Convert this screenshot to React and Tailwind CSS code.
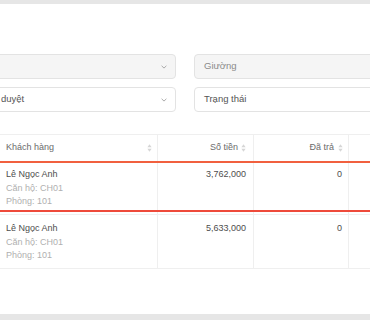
import React from "react";

function Chevron() {
  return (
    <svg width="6" height="4" viewBox="0 0 6 4" className="shrink-0">
      <path d="M0.6 0.8 L3 3.1 L5.4 0.8" fill="none" stroke="#a0a0a0" strokeWidth="0.9" />
    </svg>
  );
}

function Sort() {
  return (
    <svg width="5" height="8" viewBox="0 0 5 8" className="shrink-0">
      <path d="M2.5 0.3 L4.6 3.2 L0.4 3.2 Z" fill="#d6d6d6" />
      <path d="M2.5 7.7 L4.6 4.8 L0.4 4.8 Z" fill="#d6d6d6" />
    </svg>
  );
}

function Customer() {
  return (
    <div className="pl-[6px] pt-[7px] leading-[13.5px]">
      <div className="text-[#4d4d4d]">Lê Ngọc Anh</div>
      <div className="text-[#b0b0b0]">Căn hộ: CH01</div>
      <div className="text-[#b0b0b0]">Phòng: 101</div>
    </div>
  );
}

function Row({ amount, selected }) {
  return (
    <div className="relative grid grid-cols-[158px_96px_95px_1fr] h-[54px]">
      <div className="border-r border-b border-[#efefef]">
        <Customer />
      </div>
      <div className="border-r border-b border-[#efefef] pr-[7px] pt-[7px] leading-[13.5px] text-right text-[#4d4d4d]">
        {amount}
      </div>
      <div className="border-r border-b border-[#efefef] pr-[6px] pt-[7px] leading-[13.5px] text-right text-[#4d4d4d]">
        0
      </div>
      <div className="border-b border-[#efefef]"></div>
      {selected && (
        <>
          <div className="absolute left-0 right-0 top-0 h-[2px] bg-[#f1603f]"></div>
          <div className="absolute left-0 right-0 top-[49px] h-[2px] bg-[#ee4a3a]"></div>
        </>
      )}
    </div>
  );
}

export default function App() {
  return (
    <div
      className="w-[370px] h-[320px] overflow-hidden bg-white flex flex-col"
      style={{ fontFamily: '"Liberation Sans", Arial, sans-serif' }}
    >
      <div className="h-[4px] bg-[#e6e6e6] shrink-0"></div>
      <div className="flex-1 overflow-hidden pt-[50px]">
        <div className="flex gap-[18px] ml-[-10px]">
          <div className="w-[186px] h-[25px] shrink-0 rounded-[4px] border border-[#e3e3e3] bg-[#f5f5f5] flex items-center justify-end pr-[8px]">
            <Chevron />
          </div>
          <div className="w-[220px] h-[25px] shrink-0 rounded-[4px] border border-[#e3e3e3] bg-[#f5f5f5] flex items-center pl-[9px] text-[9.5px] text-[#8a8a8a]">
            Giường
          </div>
        </div>
        <div className="flex gap-[18px] ml-[-10px] mt-[8px]">
          <div className="w-[186px] h-[25px] shrink-0 rounded-[4px] border border-[#e3e3e3] bg-white flex items-center justify-between pl-[10px] pr-[8px] text-[9.5px] text-[#555]">
            <span>duyệt</span>
            <Chevron />
          </div>
          <div className="w-[220px] h-[25px] shrink-0 rounded-[4px] border border-[#e3e3e3] bg-white flex items-center pl-[9px] text-[9.5px] text-[#555]">
            Trạng thái
          </div>
        </div>

        <div className="mt-[22px] text-[9px]">
          <div className="grid grid-cols-[158px_96px_95px_1fr] h-[27px] border-t border-[#efefef] text-[#6b6b6b]">
            <div className="border-r border-[#efefef] flex items-center justify-between pl-[6px] pr-[5px]">
              <span>Khách hàng</span>
              <Sort />
            </div>
            <div className="border-r border-[#efefef] flex items-center justify-end gap-[3px] pr-[7px]">
              <span>Số tiền</span>
              <Sort />
            </div>
            <div className="border-r border-[#efefef] flex items-center justify-end gap-[4px] pr-[5px]">
              <span>Đã trả</span>
              <Sort />
            </div>
            <div></div>
          </div>
          <Row amount="3,762,000" selected />
          <Row amount="5,633,000" />
        </div>
      </div>
      <div className="h-[6px] bg-[#e6e6e6] shrink-0"></div>
    </div>
  );
}
